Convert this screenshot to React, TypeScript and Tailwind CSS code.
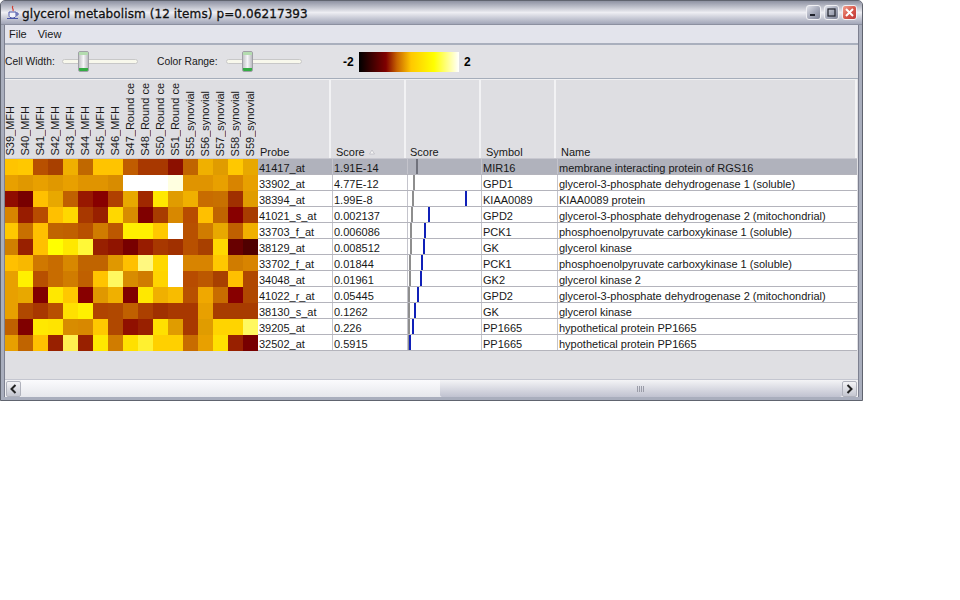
const labels = ["S39_MFH","S40_MFH","S41_MFH","S42_MFH","S43_MFH","S44_MFH","S45_MFH","S46_MFH","S47_Round ce","S48_Round ce","S50_Round ce","S51_Round ce","S55_synovial","S56_synovial","S57_synovial","S58_synovial","S59_synovial"];

const heat = [
"FFC400 FFC800 B85000 A84000 F0B000 C06800 FFC400 FFC400 C05C00 A83800 A83800 8C1000 C06400 F0B000 E09C00 FFC800 E8A800",
"E8A000 E09800 E8A000 E09800 E8A000 E09400 E09400 D88C00 FFFFFF FFFFFF FFFFFF FFFFE0 E09400 E09400 E8A000 D88400 E8A000",
"900C00 780000 FFC000 E8A800 C06000 981800 880000 B04000 E8A800 A02800 FFE800 E09C00 F0B000 C86C00 C87000 A03000 E09C00",
"D88400 981C00 B84C00 FFC000 FFD800 A83800 982000 FFD800 D88C00 800000 A83C00 D88800 B84C00 FFC000 C06400 880000 A83C00",
"FFC800 C87000 FFC000 C06400 C06000 B85000 D07C00 BC5800 FFF000 FFF000 FFC800 FFFFFF B85000 D07C00 E8A800 C06000 F0B000",
"D08000 982000 FFC000 FFFF00 FFE800 FFF838 982000 901400 780000 981C00 A83800 A03000 B85000 A84000 FFD800 680000 500000",
"FFC000 F8B800 D07800 C86C00 D88800 C06400 C06400 E09800 FFC000 FFF880 FFD800 FFFFFF D88400 D88400 FFC800 D07C00 D88400",
"E8A000 FFF000 B85000 C86C00 D07C00 C06000 FFC400 FFF860 D88C00 D07C00 FFD400 FFFFFF B84C00 BC5800 A84000 FFC000 B04800",
"E8A000 E8A800 800000 FFE800 FFC800 880000 E09800 F0B000 800000 FFE800 F0B000 F8BC00 B85000 F0A800 C86C00 880000 B04800",
"E8A000 B04800 A83800 B85000 FFE000 FFF000 B04400 B04800 C06000 AC4000 A03000 A83800 A83800 E8A000 A83C00 A83C00 A83C00",
"C06000 800000 FFE800 FFE400 D88C00 D88800 FFC800 B04800 901000 982000 FFE000 E09C00 A83800 E09C00 FFD400 FFD400 FFF860",
"E8A000 C06400 FFC000 982000 FFF050 982000 FFE800 D07C00 FFE000 FFF030 FFD000 FFD000 C86C00 E8A000 FFE000 982000 780000",
].map((r) => r.split(" "));

const rows = [
  { probe: "41417_at", score: "1.91E-14", gray: 417, blue: 0, symbol: "MIR16", name: "membrane interacting protein of RGS16" },
  { probe: "33902_at", score: "4.77E-12", gray: 414, blue: 0, symbol: "GPD1", name: "glycerol-3-phosphate dehydrogenase 1 (soluble)" },
  { probe: "38394_at", score: "1.99E-8", gray: 413, blue: 466, symbol: "KIAA0089", name: "KIAA0089 protein" },
  { probe: "41021_s_at", score: "0.002137", gray: 412, blue: 429, symbol: "GPD2", name: "glycerol-3-phosphate dehydrogenase 2 (mitochondrial)" },
  { probe: "33703_f_at", score: "0.006086", gray: 411, blue: 425, symbol: "PCK1", name: "phosphoenolpyruvate carboxykinase 1 (soluble)" },
  { probe: "38129_at", score: "0.008512", gray: 411, blue: 424, symbol: "GK", name: "glycerol kinase" },
  { probe: "33702_f_at", score: "0.01844", gray: 410, blue: 422, symbol: "PCK1", name: "phosphoenolpyruvate carboxykinase 1 (soluble)" },
  { probe: "34048_at", score: "0.01961", gray: 410, blue: 421, symbol: "GK2", name: "glycerol kinase 2" },
  { probe: "41022_r_at", score: "0.05445", gray: 409, blue: 418, symbol: "GPD2", name: "glycerol-3-phosphate dehydrogenase 2 (mitochondrial)" },
  { probe: "38130_s_at", score: "0.1262", gray: 409, blue: 415, symbol: "GK", name: "glycerol kinase" },
  { probe: "39205_at", score: "0.226", gray: 409, blue: 413, symbol: "PP1665", name: "hypothetical protein PP1665" },
  { probe: "32502_at", score: "0.5915", gray: 409, blue: 410, symbol: "PP1665", name: "hypothetical protein PP1665" },
];

function Slider() {
  return (
    <div className="w-[76px] h-[21px] flex items-center relative">
      <div className="w-full h-[5px] rounded-full bg-[#f8f8ec] border border-[#c8c8c8]" />
      <div className="absolute left-[16px] top-0 w-[11px] h-[21px] rounded-[2px] border border-[#a0a0a6] bg-gradient-to-r from-[#c4c4c8] via-[#f6f6f8] to-[#bcbcc2] flex flex-col justify-between overflow-hidden">
        <div className="h-[3px] bg-[#b4dcb0]" />
        <div className="h-[3px] bg-[#34ac44]" />
      </div>
    </div>
  );
}

function WinButton({ kind }: { kind: "min" | "max" | "close" }) {
  const bg =
    kind === "close"
      ? "bg-gradient-to-br from-[#f0a090] via-[#d8584c] to-[#c03838]"
      : "bg-gradient-to-br from-[#e0e2ea] via-[#a8acbc] to-[#7f8498]";
  return (
    <div className={`w-[15px] h-[15px] rounded-[3px] border border-[#f0f0f4] flex items-center justify-center ${bg}`}>
      <svg width="11" height="11" viewBox="0 0 11 11">
        {kind === "min" && <rect x="2" y="7" width="5" height="2" fill="#20222c" />}
        {kind === "max" && <rect x="2" y="2" width="7" height="7" fill="none" stroke="#20222c" strokeWidth="1.2" />}
        {kind === "close" && <path d="M2 2 L9 9 M9 2 L2 9" stroke="#fff" strokeWidth="2" />}
      </svg>
    </div>
  );
}

function TitleIcon() {
  return (
    <svg width="14" height="15" viewBox="0 0 14 15">
      <path d="M3 7h7v3.500c0 1.500-1.500 2.500-3.500 2.500S3 12 3 10.500z" fill="#f4f4fa" stroke="#4a55a8" strokeWidth="1" />
      <path d="M10 8h2v2h-2" fill="none" stroke="#4a55a8" strokeWidth="1" />
      <path d="M1 13.500h11" stroke="#4a55a8" strokeWidth="1" />
      <path d="M7 1c-2 2 1 2.500 0 5" fill="none" stroke="#d03c30" strokeWidth="1.200" />
    </svg>
  );
}

function Arrow({ dir }: { dir: "l" | "r" }) {
  return (
    <div className="w-[15px] h-[16px] shrink-0 rounded-[2px] border border-[#b0b2bc] bg-gradient-to-b from-[#f4f4f6] to-[#c4c6d0] flex items-center justify-center">
      <svg width="9" height="10" viewBox="0 0 9 10">
        <path d={dir === "l" ? "M6.500 1 L2.500 5 L6.500 9" : "M2.500 1 L6.500 5 L2.500 9"} fill="none" stroke="#222" strokeWidth="2" />
      </svg>
    </div>
  );
}

export default function App() {
  return (
    <div className="w-[960px] h-[600px] bg-white text-[11px] text-[#181818] font-['Liberation_Sans',Arial,sans-serif] overflow-hidden">
      <div className="w-[863px] h-[401px] flex flex-col bg-[#a9aebd] border border-[#60646f] rounded-t-[5px] overflow-hidden">
        {/* Title bar */}
        <div className="h-[24px] shrink-0 flex items-center pl-[5px] pr-[5px] bg-gradient-to-b from-[#8e92a2] via-[#eeeef3] to-[#a2a6b8] border-b border-[#8c90a0]">
          <TitleIcon />
          <span className="ml-[2px] mt-[2px] text-[12px] leading-none tracking-[0.1px] text-[#111] font-['DejaVu_Sans',sans-serif] whitespace-nowrap [-webkit-text-stroke:0.3px_#111]">
            glycerol metabolism (12 items) p=0.06217393
          </span>
          <div className="ml-auto flex gap-[3px]">
            <WinButton kind="min" />
            <WinButton kind="max" />
            <WinButton kind="close" />
          </div>
        </div>

        {/* Window content */}
        <div className="flex-1 mx-[3px] mb-[3px] flex flex-col bg-[#dfdfe3] border-l border-r border-[#7d8090] min-h-0">
          {/* Menu */}
          <div className="h-[20px] shrink-0 flex items-center pl-[4px] pt-[1px] gap-[11px] bg-[#e3e4ec] border-b-2 border-[#a9afbd]">
            <span>File</span>
            <span>View</span>
          </div>

          {/* Toolbar */}
          <div className="h-[34px] shrink-0 flex items-center border-b border-[#a5adba] bg-[#e1e1e5]">
            <span className="w-[57px] text-[10.3px]">Cell Width:</span>
            <Slider />
            <span className="ml-[19px] w-[69px] text-[10.3px]">Color Range:</span>
            <Slider />
            <span className="ml-[41px] w-[16px] font-bold text-[12px] text-black leading-none">-2</span>
            <div className="w-[100px] h-[20px] bg-[linear-gradient(to_right,#000000,#800000_27%,#c86400_38%,#ffc800_52%,#ffff00_75%,#ffffff)]" />
            <span className="ml-[5px] font-bold text-[12px] text-black leading-none">2</span>
          </div>

          {/* Table */}
          <div className="flex-1 flex flex-col min-h-0 pr-[1px]">
            {/* Header */}
            <div className="h-[80px] shrink-0 flex bg-[#dedee2] border-b border-[#c8c8d0] border-t border-t-[#f0f0f2]">
              <div className="w-[253px] shrink-0 flex items-end pb-[2px]">
                {labels.map((l, i) => (
                  <div key={l} className={`${i === 0 ? "w-[13px]" : "w-[15px]"} flex justify-center shrink-0`}>
                    <span className={`[writing-mode:vertical-rl] rotate-180 text-[11px] leading-[13px] whitespace-nowrap ${i === 0 ? "mr-[2px]" : ""}`}>{l}</span>
                  </div>
                ))}
              </div>
              <div className="w-[73px] shrink-0 flex items-end pl-[2px] pb-[1px] leading-[10px] border-r-2 border-[#f2f2f4]">Probe</div>
              <div className="w-[75px] shrink-0 flex items-end pl-[5px] pb-[1px] leading-[10px] border-r-2 border-[#f2f2f4] gap-[4px]">
                Score
                <svg width="6" height="6" viewBox="0 0 6 6" className="mb-[2px]"><path d="M3 1 L5.500 5 H0.500 Z" fill="#f4f4f4" stroke="#b8b8c0" strokeWidth="0.700" /></svg>
              </div>
              <div className="w-[75px] shrink-0 flex items-end pl-[4px] pb-[1px] leading-[10px] border-r-2 border-[#f2f2f4]">Score</div>
              <div className="w-[75px] shrink-0 flex items-end pl-[5px] pb-[1px] leading-[10px] border-r-2 border-[#f2f2f4]">Symbol</div>
              <div className="flex-1 flex items-end pl-[5px] pb-[1px] leading-[10px] border-r-2 border-[#f2f2f4]">Name</div>
            </div>

            {/* Rows */}
            <div className="shrink-0 flex flex-col">
              {rows.map((r, ri) => (
                <div key={ri} className="h-[16px] flex shrink-0">
                  <div className="w-[253px] shrink-0 flex">
                    {heat[ri].map((c, ci) => (
                      <div key={ci} className={`${ci === 0 ? "w-[13px]" : "w-[15px]"} h-full shrink-0`} style={{ backgroundColor: `#${c}` }} />
                    ))}
                  </div>
                  <div className={`flex-1 flex border-b border-[#b4b4bc] ${ri === 0 ? "bg-[#b0b2bc]" : "bg-white"}`}>
                    <div className="w-[75px] shrink-0 pl-[1px] leading-[19px] border-r border-[#c4c4cc]">{r.probe}</div>
                    <div className="w-[75px] shrink-0 pl-[1px] leading-[19px] border-r border-[#c4c4cc]">{r.score}</div>
                    <div className="w-[74px] shrink-0 border-r border-[#c4c4cc]">
                      <svg width="73" height="15" className="block">
                        <rect x={r.gray - 1 - 408} y="0" width="2" height="15" fill={ri === 0 ? "#70727c" : "#8e8e8e"} />
                        {r.blue > 0 && <rect x={r.blue - 1 - 408} y="0" width="2" height="15" fill="#1020b8" />}
                      </svg>
                    </div>
                    <div className="w-[76px] shrink-0 pl-[1px] leading-[19px] border-r border-[#c4c4cc]">{r.symbol}</div>
                    <div className="flex-1 pl-[1px] leading-[19px] whitespace-nowrap">{r.name}</div>
                  </div>
                </div>
              ))}
            </div>

            <div className="flex-1" />
          </div>

          {/* Scrollbar */}
          <div className="h-[18px] shrink-0 flex items-center border-t border-[#c4c6d0] pl-[1px] pr-[1px] bg-[#f2f2f4]">
            <Arrow dir="l" />
            <div className="w-[419px] h-full bg-gradient-to-b from-[#fbfbfd] to-[#e6e7ec]" />
            <div className="flex-1 h-full flex items-center justify-center rounded-[2px] bg-gradient-to-b from-[#f4f4f6] to-[#c0c2d0]">
              <div className="w-[8px] h-[6px] bg-[repeating-linear-gradient(to_right,#9a9ca8_0_1px,transparent_1px_2px)]" />
            </div>
            <Arrow dir="r" />
          </div>
        </div>
      </div>
    </div>
  );
}
